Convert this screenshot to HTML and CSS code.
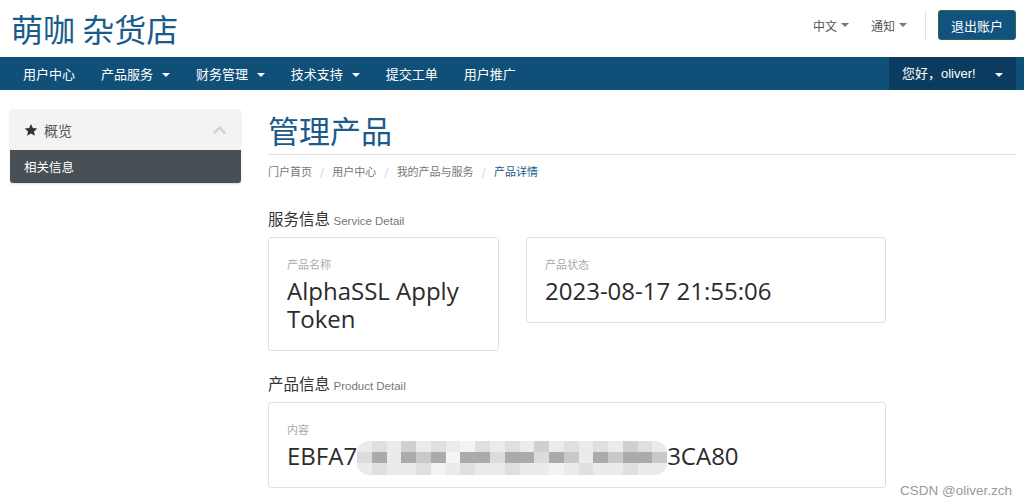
FILE: index.html
```html
<!DOCTYPE html>
<html lang="zh-CN">
<head>
  <meta charset="UTF-8">
  <title>管理产品 - 萌咖 杂货店</title>
  <link rel="stylesheet" href="styles.css">
</head>
<body>
  <!-- Top header -->
  <header class="topbar">
    <div class="brand">萌咖 杂货店</div>
    <div class="top-right">
      <a class="top-link">中文 <span class="caret"></span></a>
      <a class="top-link">通知 <span class="caret"></span></a>
      <span class="divider"></span>
      <button class="btn-logout">退出账户</button>
    </div>
  </header>

  <!-- Main navigation -->
  <nav class="navbar">
    <ul class="nav-left">
      <li>用户中心</li>
      <li>产品服务 <span class="caret"></span></li>
      <li>财务管理 <span class="caret"></span></li>
      <li>技术支持 <span class="caret"></span></li>
      <li>提交工单</li>
      <li>用户推广</li>
    </ul>
    <div class="nav-user">您好，oliver! <span class="caret"></span></div>
  </nav>

  <div class="page">
    <aside class="sidebar">
      <div class="side-panel">
        <div class="side-head">
          <svg class="star" viewBox="0 0 24 24" width="14" height="14"><path d="M12 1.5l3.2 7 7.6.8-5.7 5.1 1.6 7.5L12 18l-6.7 3.9 1.6-7.5L1.2 9.3l7.6-.8z" fill="#333"/></svg>
          <span class="side-title">概览</span>
          <svg class="chevron" viewBox="0 0 16 10" width="15" height="10"><path d="M2 8.5l6-6 6 6" fill="none" stroke="#d2d2d2" stroke-width="2.6"/></svg>
        </div>
        <div class="side-item active">相关信息</div>
      </div>
    </aside>

    <main class="content">
      <h1 class="page-title">管理产品</h1>
      <ol class="breadcrumb">
        <li>门户首页</li>
        <li>用户中心</li>
        <li>我的产品与服务</li>
        <li class="current">产品详情</li>
      </ol>

      <h3 class="section-title">服务信息 <small>Service Detail</small></h3>
      <div class="cards">
        <div class="card">
          <div class="card-label">产品名称</div>
          <div class="card-value">AlphaSSL Apply Token</div>
        </div>
        <div class="card">
          <div class="card-label">产品状态</div>
          <div class="card-value">2023-08-17 21:55:06</div>
        </div>
      </div>

      <h3 class="section-title">产品信息 <small>Product Detail</small></h3>
      <div class="card card-wide">
        <div class="card-label">内容</div>
        <div class="card-value">EBFA7<span class="mosaic">
          <span class="row r-top">
            <i class="a"></i><i class="b"></i><i class="a"></i><i class="c"></i><i class="a"></i><i class="b"></i><i class="a"></i><i class="d"></i><i class="b"></i><i class="a"></i><i class="b"></i><i class="a"></i><i class="c"></i><i class="a"></i><i class="b"></i><i class="a"></i><i class="b"></i><i class="a"></i><i class="c"></i><i class="b"></i><i class="a"></i>
          </span>
          <span class="row r-mid">
            <i class="b"></i><i class="e"></i><i class="a"></i><i class="e"></i><i class="c"></i><i class="e"></i><i class="d"></i><i class="e"></i><i class="e"></i><i class="b"></i><i class="e"></i><i class="e"></i><i class="b"></i><i class="e"></i><i class="c"></i><i class="a"></i><i class="e"></i><i class="c"></i><i class="e"></i><i class="e"></i><i class="c"></i>
          </span>
          <span class="row r-bot">
            <i class="a"></i><i class="b"></i><i class="a"></i><i class="a"></i><i class="b"></i><i class="d"></i><i class="a"></i><i class="b"></i><i class="a"></i><i class="a"></i><i class="b"></i><i class="a"></i><i class="a"></i><i class="d"></i><i class="a"></i><i class="b"></i><i class="a"></i><i class="a"></i><i class="b"></i><i class="a"></i><i class="a"></i>
          </span>
        </span>3CA80</div>
      </div>
    </main>
  </div>

  <div class="watermark">CSDN @oliver.zch</div>
</body>
</html>
```

FILE: styles.css
```css
body {
  margin: 0;
  background: #fff;
  font-family: "Liberation Sans", "Noto Sans CJK SC", sans-serif;
  color: #333;
  position: relative;
  height: 504px;
  overflow: hidden;
}

/* Header */
.topbar {
  height: 57px;
  display: flex;
  align-items: center;
  justify-content: space-between;
  padding: 0 8px 0 11px;
}

.brand {
  font-family: "Noto Sans CJK SC", sans-serif;
  font-size: 32px;
  line-height: 40px;
  color: #1a5b8c;
  margin-top: -2px;
}

.top-right {
  display: flex;
  align-items: center;
  margin-top: -7px;
}

.top-link {
  font-family: "Noto Sans CJK SC", sans-serif;
  font-size: 12px;
  color: #555;
  margin-left: 22px;
  display: flex;
  align-items: center;
  gap: 4px;
}

.caret {
  display: inline-block;
  width: 0;
  height: 0;
  border-left: 4px solid transparent;
  border-right: 4px solid transparent;
  border-top: 4px solid currentColor;
  vertical-align: middle;
}

.top-link .caret {
  color: #777;
}

.divider {
  width: 1px;
  height: 30px;
  background: #e3e3e3;
  margin: 0 12px 0 18px;
}

.btn-logout {
  font-family: "Noto Sans CJK SC", sans-serif;
  font-size: 13px;
  color: #fff;
  background: #12527f;
  border: 1px solid #2f6a45;
  border-radius: 3px;
  width: 78px;
  height: 30px;
  padding: 0;
}

/* Navbar */
.navbar {
  height: 33px;
  background: #105078;
  display: flex;
  justify-content: space-between;
  padding: 0 8px 0 10px;
}

.nav-left {
  list-style: none;
  margin: 0;
  padding: 0;
  display: flex;
}

.nav-left li {
  font-family: "Noto Sans CJK SC", sans-serif;
  font-size: 13px;
  color: #fff;
  line-height: 33px;
  padding: 0 13px;
}

.nav-left li .caret {
  margin-left: 6px;
}

.nav-user {
  background: #0b3c5f;
  color: #fff;
  font-size: 13px;
  line-height: 33px;
  width: 127px;
  padding-left: 13px;
  box-sizing: border-box;
}

.nav-user .caret {
  margin-left: 16px;
}

/* Page layout */
.page {
  display: flex;
  gap: 27px;
  padding: 19px 8px 0 10px;
}

.sidebar {
  width: 231px;
  flex-shrink: 0;
}

.side-panel {
  border-radius: 3px;
  overflow: hidden;
  box-shadow: 0 1px 2px rgba(0, 0, 0, 0.15);
}

.side-head {
  height: 41px;
  background: #f3f3f3;
  display: flex;
  align-items: center;
  padding: 0 14px 0 14px;
}

.side-title {
  font-family: "Noto Sans CJK SC", sans-serif;
  font-size: 14px;
  color: #555;
  margin-left: 6px;
  flex: 1;
}

.side-item {
  font-family: "Noto Sans CJK SC", sans-serif;
  font-size: 12.5px;
  height: 33px;
  line-height: 33px;
  padding: 0 14px;
}

.side-item.active {
  background: #484f55;
  color: #fff;
}

/* Content */
.content {
  flex: 1;
}

.page-title {
  font-family: "Noto Sans CJK SC", sans-serif;
  font-weight: normal;
  font-size: 31px;
  line-height: 36px;
  color: #1a5b8c;
  margin: 3px 0 0;
  padding-bottom: 6px;
  border-bottom: 1px solid #e2e2e2;
}

.breadcrumb {
  list-style: none;
  margin: 8px 0 0;
  padding: 0;
  display: flex;
  font-family: "Noto Sans CJK SC", sans-serif;
  font-size: 11px;
  line-height: 16px;
  color: #777;
}

.breadcrumb li + li::before {
  content: "/";
  color: #ccc;
  padding: 0 8px;
}

.breadcrumb .current {
  color: #1a5b8c;
}

.section-title {
  font-family: "Noto Sans CJK SC", sans-serif;
  font-weight: normal;
  font-size: 15.5px;
  line-height: 22px;
  height: 22px;
  color: #333;
  margin: 28px 0 8px;
}

.cards + .section-title {
  margin-top: 21px;
}

.section-title small {
  font-family: "Liberation Sans", sans-serif;
  font-size: 11.5px;
  line-height: 1;
  color: #777;
}

.cards {
  display: flex;
  align-items: flex-start;
  gap: 27px;
}

.card {
  border: 1px solid #e0e0e0;
  border-radius: 3px;
  padding: 19px 18px 17px;
  width: 360px;
  box-sizing: border-box;
}

.cards .card:first-child {
  width: 231px;
}

.card-wide {
  width: 618px;
}

.card-label {
  font-family: "Noto Sans CJK SC", sans-serif;
  font-size: 11px;
  line-height: 14px;
  color: #aaa;
  margin-bottom: 6px;
}

.card-value {
  font-family: "Open Sans", "Noto Sans", sans-serif;
  font-size: 24px;
  line-height: 28px;
  color: #2b2b2b;
}

/* Blurred part of the token */
.mosaic {
  display: inline-flex;
  flex-direction: column;
  vertical-align: middle;
  width: 310px;
  height: 34px;
  border-radius: 12px;
  overflow: hidden;
  background: #ececec;
  filter: blur(0.6px);
  margin: -7px 0 -5px;
}

.mosaic .row {
  display: flex;
  flex: 1;
}

.mosaic i {
  flex: 1;
}

.mosaic .a { background: #ebebeb; }
.mosaic .b { background: #dcdcdc; }
.mosaic .c { background: #c9c9c9; }
.mosaic .d { background: #f6f5f2; }
.mosaic .e { background: #a9abad; }

.mosaic .r-top i,
.mosaic .r-bot i {
  opacity: 0.8;
}

.watermark {
  position: absolute;
  right: 12px;
  bottom: 6px;
  font-size: 13.5px;
  color: #9a9a9a;
}
```
